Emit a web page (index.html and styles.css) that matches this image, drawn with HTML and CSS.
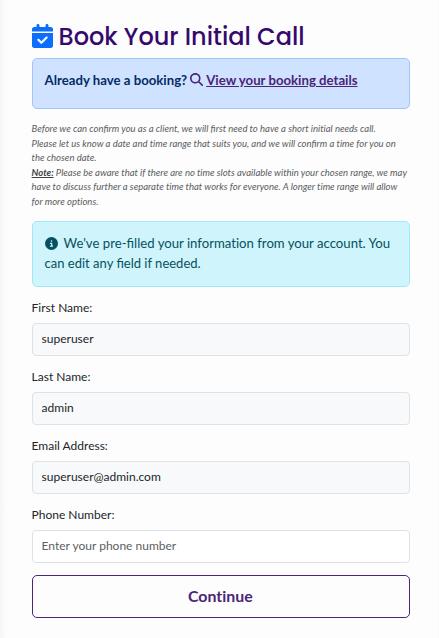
FILE: index.html
```html
<!DOCTYPE html>
<html lang="en">
<head>
<meta charset="utf-8">
<title>Book Your Initial Call</title>
<link rel="stylesheet" href="styles.css">
</head>
<body>
<main class="panel">
  <h1 class="title">
    <svg class="title-icon" viewBox="0 0 448 512" aria-hidden="true"><path d="M128 0c17.7 0 32 14.3 32 32V64H288V32c0-17.7 14.3-32 32-32s32 14.3 32 32V64h48c26.5 0 48 21.5 48 48v48H0V112C0 85.5 21.5 64 48 64H96V32c0-17.7 14.3-32 32-32zM0 192H448V464c0 26.5-21.5 48-48 48H48c-26.5 0-48-21.5-48-48V192zM329 305c9.4-9.4 9.4-24.6 0-33.9s-24.6-9.4-33.9 0l-95 95-47-47c-9.4-9.4-24.6-9.4-33.9 0s-9.4 24.6 0 33.9l64 64c9.4 9.4 24.6 9.4 33.9 0L329 305z"/></svg>
    <span class="title-text">Book Your Initial Call</span>
  </h1>
  <div class="alert alert-primary">
    <strong>Already have a booking?</strong>
    <svg class="search-icon" viewBox="0 0 512 512" aria-hidden="true"><path d="M416 208c0 45.9-14.9 88.3-40 122.7L502.6 457.4c12.5 12.5 12.5 32.8 0 45.3s-32.8 12.5-45.3 0L330.7 376c-34.4 25.2-76.8 40-122.7 40C93.1 416 0 322.9 0 208S93.1 0 208 0S416 93.1 416 208zM208 352a144 144 0 1 0 0-288 144 144 0 1 0 0 288z"/></svg>
    <a class="alert-link" href="#">View your booking details</a>
  </div>
  <p class="intro">Before we can <span class="lig">confirm</span> you as a client, we will <span class="lig">first</span> need to have a short initial needs call.<br>Please let us know a date and time range that suits you, and we will <span class="lig">confirm</span> a time for you on<br>the chosen date.<br><strong class="note">Note:</strong> Please be aware that if there are no time slots available within your chosen range, we may<br>have to discuss further a separate time that works for everyone. A longer time range will allow<br>for more options.</p>
  <div class="alert alert-info">
    <svg class="info-icon" viewBox="0 0 512 512" aria-hidden="true"><path d="M256 512A256 256 0 1 0 256 0a256 256 0 1 0 0 512zM216 336h24V272H216c-13.3 0-24-10.7-24-24s10.7-24 24-24h48c13.3 0 24 10.7 24 24v88h8c13.3 0 24 10.7 24 24s-10.7 24-24 24H216c-13.3 0-24-10.7-24-24s10.7-24 24-24zm40-208a32 32 0 1 1 0 64 32 32 0 1 1 0-64z"/></svg>We've <span class="lig">pre-filled</span> your information from your account. You<br><span class="second">can edit any <span class="lig">field</span> if needed.</span>
  </div>
  <form class="form">
    <div class="field"><label for="first">First Name:</label><input class="filled" id="first" type="text" value="superuser"></div>
    <div class="field"><label for="last">Last Name:</label><input class="filled" id="last" type="text" value="admin"></div>
    <div class="field"><label for="email">Email Address:</label><input class="filled" id="email" type="email" value="superuser@admin.com"></div>
    <div class="field"><label for="phone">Phone Number:</label><input id="phone" type="tel" placeholder="Enter your phone number"></div>
    <button class="submit" type="button">Continue</button>
  </form>
</main>
</body>
</html>
```
FILE: styles.css
```css
* { box-sizing: border-box; }
body {
  margin: 0;
  height: 638px;
  overflow: hidden;
  background: linear-gradient(to right, #f6f6f6, #fdfdfd 6px, #fdfdfd 436px, #fafafa);
  font-family: Lato, "Liberation Sans", sans-serif;
  font-size: 12px;
  font-variant-ligatures: none;
  color: #212529;
}
.lig { font-variant-ligatures: normal; }
.panel { padding: 20px 29px 0 31.6px; }
.title {
  display: flex;
  align-items: center;
  gap: 6px;
  height: 32px;
  margin: 0 0 6px;
  font-family: Poppins, Lato, sans-serif;
  font-weight: 500;
  font-size: 24px;
  line-height: 32px;
  color: #36096d;
  white-space: nowrap;
}
.title-icon { width: 21px; height: 24px; fill: #0d6efd; }
.title-text { padding-top: 2px; }
.alert {
  border: 1px solid;
  border-radius: 5px;
  padding: 11px 12px;
  font-size: 13.16px;
  line-height: 20px;
  white-space: nowrap;
}
.alert-primary {
  display: flex;
  align-items: flex-start;
  gap: 3px;
  height: 51px;
  background: #cfe2ff;
  border-color: #9ec5fe;
  color: #052c65;
  font-size: 13.2px;
}
.search-icon { width: 13px; height: 13px; margin-top: 3px; fill: #4b2578; }
.alert-link { font-weight: 700; color: #4b2578; }
.intro {
  height: 88px;
  margin: 12px 0;
  padding-top: 1px;
  font-size: 9.5px;
  font-style: italic;
  line-height: 14.6px;
  color: #595c5f;
  white-space: nowrap;
}
.note { text-decoration: underline; color: #3f4245; }
.alert-info {
  height: 66px;
  background: #cff4fc;
  border-color: #9eeaf9;
  color: #055160;
}
.info-icon { width: 13px; height: 13px; margin-right: 6px; vertical-align: -2px; fill: #055160; }
.second { font-size: 13px; }
.form { margin-top: 12px; }
.field { height: 57px; margin-bottom: 12px; }
.field label { display: block; height: 24px; line-height: 18px; }
.field input {
  display: block;
  width: 100%;
  height: 33px;
  padding: 0 9px 2px;
  border: 1px solid #dee2e6;
  border-radius: 4px;
  background: #fff;
  font: inherit;
  font-variant-ligatures: none;
  color: #212529;
}
.field .filled { background: #f8f9fa; }
.field input::placeholder { color: #5c6064; opacity: 1; }
.submit {
  display: block;
  width: 100%;
  height: 43px;
  padding: 0 7px 2px 6px;
  border: 1px solid #4b2578;
  border-radius: 5px;
  background: transparent;
  font: 700 15.9px Lato, sans-serif;
  font-variant-ligatures: none;
  color: #4b2578;
}
```
